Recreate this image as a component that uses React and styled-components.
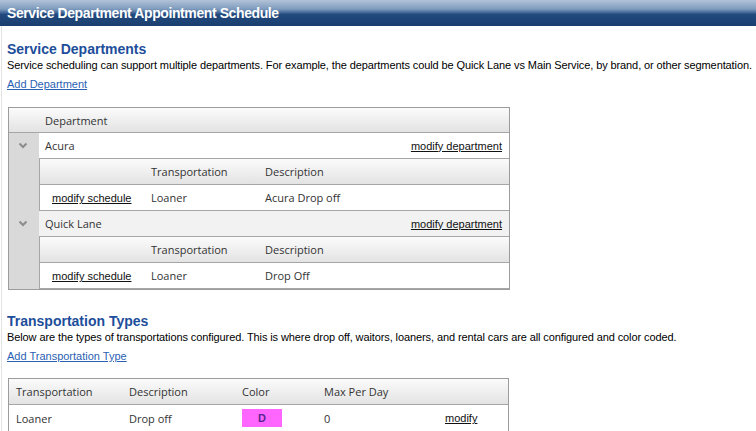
import React from "react";
import styled, { createGlobalStyle } from "styled-components";

const departments = [
  {
    name: "Acura",
    schedules: [{ transportation: "Loaner", description: "Acura Drop off" }],
  },
  {
    name: "Quick Lane",
    schedules: [{ transportation: "Loaner", description: "Drop Off" }],
  },
];

const transportTypes = [
  { name: "Loaner", description: "Drop off", code: "D", color: "#ff66ff", max: 0 },
];

const Chevron = () => (
  <svg width="10" height="7" viewBox="0 0 10 7">
    <polyline points="1.5,1.5 5,5 8.5,1.5" fill="none" stroke="#8c8c8c" strokeWidth="2" />
  </svg>
);

const App = () => (
  <>
    <GlobalStyle />
    <TitleBar>Service Department Appointment Schedule</TitleBar>
    <Page>
      <Heading>Service Departments</Heading>
      <Intro>
        Service scheduling can support multiple departments. For example, the departments could be
        Quick Lane vs Main Service, by brand, or other segmentation.
      </Intro>
      <AddLink href="#">Add Department</AddLink>

      <DeptTable>
        <DeptHead>
          <span />
          <HeadCell>Department</HeadCell>
        </DeptHead>
        {departments.map((dept, i) => (
          <DeptBlock key={dept.name}>
            <Gutter>
              <ToggleBox>
                <Chevron />
              </ToggleBox>
            </Gutter>
            <DeptMain>
              <DeptRow alt={i % 2 === 1}>
                <span>{dept.name}</span>
                <ActionLink href="#">modify department</ActionLink>
              </DeptRow>
              <SubTable>
                <SubHead>
                  <span />
                  <HeadCell>Transportation</HeadCell>
                  <HeadCell>Description</HeadCell>
                </SubHead>
                {dept.schedules.map((s) => (
                  <SubRow key={s.description}>
                    <FirstCell>
                      <ActionLink href="#">modify schedule</ActionLink>
                    </FirstCell>
                    <Cell>{s.transportation}</Cell>
                    <Cell>{s.description}</Cell>
                  </SubRow>
                ))}
              </SubTable>
            </DeptMain>
          </DeptBlock>
        ))}
      </DeptTable>

      <Heading spaced>Transportation Types</Heading>
      <Intro>
        Below are the types of transportations configured. This is where drop off, waitors, loaners,
        and rental cars are all configured and color coded.
      </Intro>
      <AddLink href="#">Add Transportation Type</AddLink>

      <TypeTable>
        <TypeHead>
          <TypeCell>Transportation</TypeCell>
          <TypeCell>Description</TypeCell>
          <TypeCell>Color</TypeCell>
          <TypeCell>Max Per Day</TypeCell>
          <TypeCell />
        </TypeHead>
        {transportTypes.map((t) => (
          <TypeRow key={t.name}>
            <TypeCell>{t.name}</TypeCell>
            <TypeCell>{t.description}</TypeCell>
            <TypeCell>
              <Swatch bg={t.color}>{t.code}</Swatch>
            </TypeCell>
            <TypeCell>{t.max}</TypeCell>
            <TypeCell>
              <ActionLink href="#">modify</ActionLink>
            </TypeCell>
          </TypeRow>
        ))}
      </TypeTable>
    </Page>
  </>
);

export default App;

const GlobalStyle = createGlobalStyle`
  body {
    margin: 0;
    background: #fff;
    font-family: "Liberation Sans", Arial, sans-serif;
  }
`;

const TitleBar = styled.div`
  height: 26px;
  display: flex;
  align-items: center;
  padding-left: 7px;
  background: linear-gradient(
    #b2c3d8 0%,
    #7e9bbd 35%,
    #3c6293 50%,
    #224a7d 55%,
    #1b3e70 100%
  );
  color: #fff;
  font-size: 14px;
  font-weight: bold;
  letter-spacing: -0.4px;
`;

const Page = styled.div`
  margin-left: 1px;
  border-left: 1px solid #e3e3e3;
  padding: 15px 0 0 5px;
`;

const Heading = styled.h2`
  margin: ${({ spaced }) => (spaced ? "23px" : "0")} 0 0;
  font-size: 14px;
  line-height: 17px;
  font-weight: bold;
  color: #1d4e9a;
`;

const Intro = styled.p`
  margin: 0;
  font-size: 11px;
  line-height: 14px;
  letter-spacing: -0.1px;
  color: #000;
  white-space: nowrap;
`;

const AddLink = styled.a`
  display: inline-block;
  margin-top: 5px;
  font-size: 11px;
  line-height: 14px;
  color: #2b5fb3;
  text-decoration: underline;
`;

const ActionLink = styled.a`
  font-family: "Liberation Sans", Arial, sans-serif;
  font-size: 11px;
  color: #111;
  text-decoration: underline;
`;

const headGradient = `linear-gradient(#fbfbfb, #e3e3e3)`;

const DeptTable = styled.div`
  width: 502px;
  box-sizing: border-box;
  margin: 15px 0 0 1px;
  border: 1px solid #9c9c9c;
  font-family: "Open Sans", sans-serif;
  font-size: 11px;
  color: #333;
`;

const DeptHead = styled.div`
  height: 24px;
  display: grid;
  grid-template-columns: 30px 1fr;
  align-items: center;
  background: ${headGradient};
  border-bottom: 1px solid #a6a6a6;
`;

const HeadCell = styled.span`
  padding-left: 6px;
`;

const DeptBlock = styled.div`
  display: flex;
`;

const Gutter = styled.div`
  width: 30px;
  flex-shrink: 0;
  background: #d9d9d9;
`;

const ToggleBox = styled.div`
  height: 25px;
  display: flex;
  align-items: center;
  justify-content: center;
  padding-right: 3px;
  box-sizing: border-box;
`;

const DeptMain = styled.div`
  flex: 1;
`;

const DeptRow = styled.div`
  height: 25px;
  display: flex;
  align-items: center;
  justify-content: space-between;
  padding: 0 7px 0 6px;
  background: ${({ alt }) => (alt ? "#f2f2f2" : "#fff")};
`;

const SubTable = styled.div`
  border: 1px solid #a6a6a6;
  border-right: none;
`;

const subColumns = `105px 114px 1fr`;

const SubHead = styled.div`
  height: 25px;
  display: grid;
  grid-template-columns: ${subColumns};
  align-items: center;
  background: ${headGradient};
  border-bottom: 1px solid #a6a6a6;
`;

const SubRow = styled.div`
  height: 25px;
  display: grid;
  grid-template-columns: ${subColumns};
  align-items: center;
  background: #fff;
`;

const FirstCell = styled.span`
  padding-left: 12px;
`;

const Cell = styled.span`
  padding-left: 6px;
`;

const TypeTable = styled.div`
  width: 501px;
  box-sizing: border-box;
  margin: 14px 0 0 1px;
  border: 1px solid #9c9c9c;
  font-family: "Open Sans", sans-serif;
  font-size: 11px;
  color: #333;
`;

const typeColumns = `113px 113px 82px 121px 1fr`;

const TypeHead = styled.div`
  height: 25px;
  display: grid;
  grid-template-columns: ${typeColumns};
  align-items: center;
  background: ${headGradient};
  border-bottom: 1px solid #a6a6a6;
`;

const TypeRow = styled.div`
  height: 26px;
  display: grid;
  grid-template-columns: ${typeColumns};
  align-items: center;
  background: #fff;
`;

const TypeCell = styled.span`
  padding-left: 7px;
  display: flex;
  align-items: center;
`;

const Swatch = styled.span`
  width: 40px;
  height: 18px;
  display: flex;
  align-items: center;
  justify-content: center;
  background: ${({ bg }) => bg};
  color: #5a2590;
  font-family: "Liberation Sans", Arial, sans-serif;
  font-weight: bold;
  font-size: 11px;
`;
